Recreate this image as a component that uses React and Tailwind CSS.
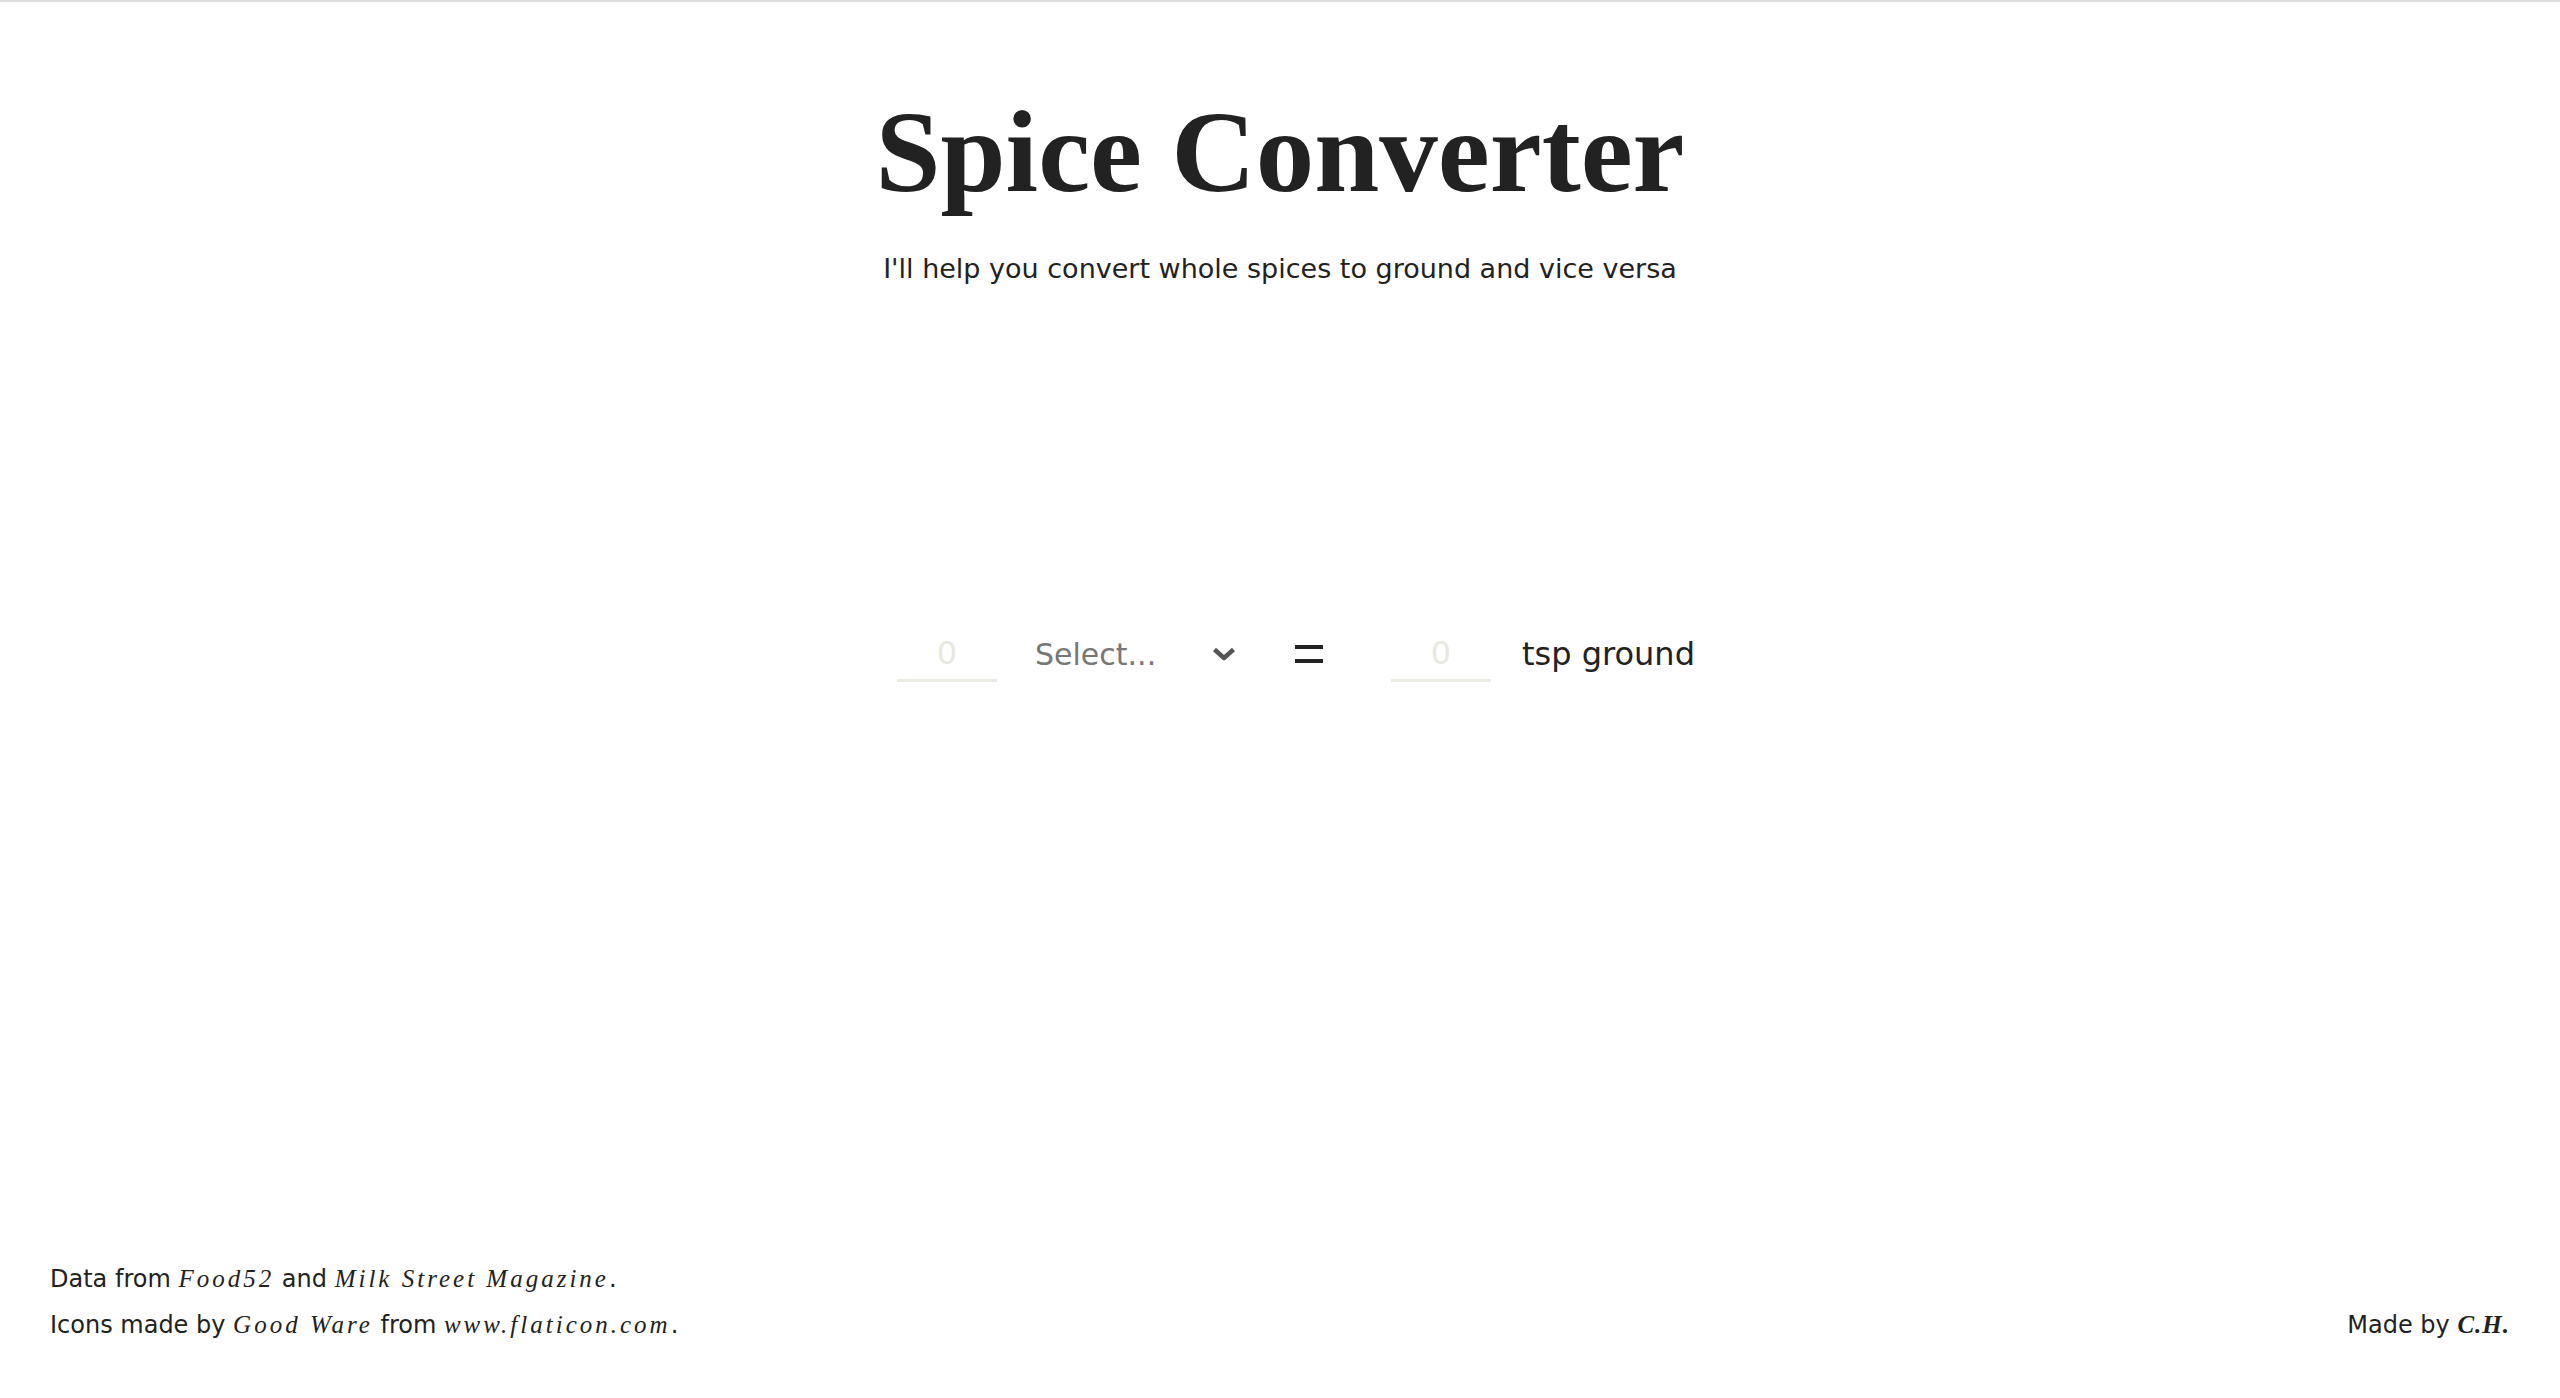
import { useState } from "react";

const sans = "font-['DejaVu_Sans',sans-serif]";
const serif = "font-['Liberation_Serif',serif]";

function Cite({ children, bold }) {
  return (
    <span
      className={`${serif} italic text-[25px] ${
        bold ? "font-bold tracking-[1px]" : "tracking-[3px]"
      }`}
    >
      {children}
    </span>
  );
}

function AmountInput({ value, onChange }) {
  return (
    <input
      type="text"
      value={value}
      onChange={(e) => onChange(e.target.value)}
      placeholder="0"
      className="w-[100px] h-[56px] border-b-[3px] border-[#ebeae3] bg-transparent text-center text-[32px] text-[#222] placeholder:text-[#e9e8e0] outline-none"
    />
  );
}

export default function App() {
  const [whole, setWhole] = useState("");
  const [ground, setGround] = useState("");

  return (
    <div className={`h-screen flex flex-col border-t-2 border-[#dddddd] bg-white text-[#222] ${sans}`}>
      {/* Header */}
      <header className="flex flex-col items-center pt-[91px]">
        <h1 className={`${serif} font-bold text-[117px] leading-none text-[#222]`}>
          Spice Converter
        </h1>
        <p className="mt-[45px] text-[27px] leading-none">
          I'll help you convert whole spices to ground and vice versa
        </p>
      </header>

      {/* Converter */}
      <main className="flex-1">
        <div className="mt-[344px] flex items-center justify-center pl-[32px]">
          <AmountInput value={whole} onChange={setWhole} />
          <div className="ml-[26px] flex h-[56px] w-[228px] items-center justify-between pl-[12px] pr-[14px]">
            <span className="text-[30px] text-[#777]">Select...</span>
            <svg width="26" height="16" viewBox="0 0 26 16" fill="none">
              <path
                d="M3.5 3.5 L13 12 L22.5 3.5"
                stroke="#555"
                strokeWidth="4.5"
                strokeLinejoin="round"
              />
            </svg>
          </div>
          <div className="ml-[44px] flex w-[28px] flex-col gap-[10px]">
            <div className="h-[4px] bg-[#222]" />
            <div className="h-[4px] bg-[#222]" />
          </div>
          <div className="ml-[68px]">
            <AmountInput value={ground} onChange={setGround} />
          </div>
          <span className="ml-[31px] text-[32px] text-[#222]">tsp ground</span>
        </div>
      </main>

      {/* Footer */}
      <footer className="flex items-end justify-between px-[50px] pb-[50px] text-[24px] leading-[46px]">
        <div>
          <p>
            Data from <Cite>Food52</Cite> and <Cite>Milk Street Magazine</Cite>.
          </p>
          <p>
            Icons made by <Cite>Good Ware</Cite> from <Cite>www.flaticon.com</Cite>.
          </p>
        </div>
        <p>
          Made by <Cite bold>C.H.</Cite>
        </p>
      </footer>
    </div>
  );
}
